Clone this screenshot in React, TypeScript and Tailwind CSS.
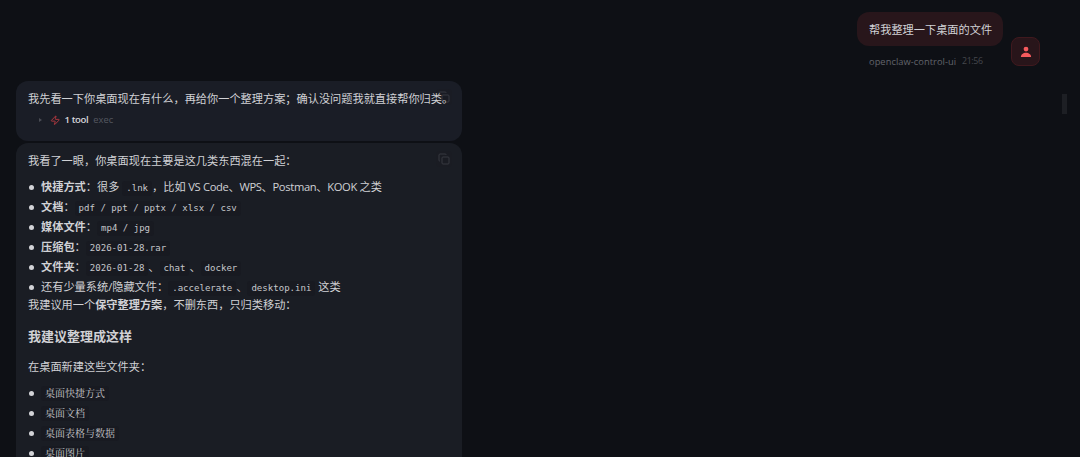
import React from 'react'
import { Zap } from 'lucide-react'

const Code: React.FC<{ children: React.ReactNode }> = ({ children }) => (
  <code className="inline-block h-[15px] rounded-[3px] bg-[#181a21] px-[4px] align-baseline font-['DejaVu_Sans_Mono','Noto_Sans_CJK_SC',monospace] text-[9.07px] leading-[15px] text-[#c6c7cb]">
    {children}
  </code>
)

const FolderName: React.FC<{ children: React.ReactNode }> = ({ children }) => (
  <code className="inline-block h-[15px] rounded-[3px] bg-[#181a21] px-[4px] font-['Noto_Serif_CJK_SC','Noto_Sans_CJK_SC',serif] text-[10px] leading-[14px] text-[#c6c7cb]">
    {children}
  </code>
)

const Item: React.FC<{ children: React.ReactNode }> = ({ children }) => (
  <li className="flex h-5 items-center whitespace-nowrap">
    <span className="mr-[7px] ml-[1px] size-[5px] shrink-0 rounded-full bg-[#d2d3d7]" />
    {children}
  </li>
)

const CopyButton: React.FC = () => (
  <button className="absolute top-[8px] right-[10px] flex size-4 items-center justify-center rounded bg-[#1b1d23]/60 text-[#373941]">
    <svg width="12" height="12" viewBox="0 0 12 12" fill="none" stroke="currentColor">
      <rect x="4" y="4" width="7" height="7" rx="1" />
      <path d="M2 8.2c-.6 0-1-.4-1-1V2c0-.6.4-1 1-1h5.2c.6 0 1 .4 1 1" />
    </svg>
  </button>
)

const FOLDERS = ['桌面快捷方式', '桌面文档', '桌面表格与数据', '桌面图片']

export default function App() {
  return (
    <div className="relative h-[457px] w-[1080px] overflow-hidden bg-[#0e1015] font-['Open_Sans','Noto_Sans_CJK_SC',sans-serif] text-[11.2px] text-[#d0d1d5]">
      <div className="flex h-[81px] items-start justify-end pt-3 pr-10">
        <div>
          <div className="flex h-[34px] w-[146px] items-center rounded-xl bg-[#28161b] pl-3 font-['Noto_Sans_CJK_SC',sans-serif] whitespace-nowrap">
            帮我整理一下桌面的文件
          </div>
          <div className="mt-[9px] flex h-[14px] items-center pl-3 text-[9.3px] whitespace-nowrap text-[#62646b]">
            <span className="w-[87px] font-medium tracking-[0.005em]">openclaw-control-ui</span>
            <span className="ml-[6px] text-[8.8px] tracking-[-0.04em] text-[#45474d]">21:56</span>
          </div>
        </div>
        <div className="mt-[25px] ml-2 flex size-[29px] items-center justify-center rounded-lg border border-[#40191e] bg-[#28151a]">
          <svg width="12" height="12" viewBox="0 0 12 12" fill="#f65a5d">
            <circle cx="6" cy="3.1" r="2.4" />
            <path d="M.9 11.1c0-2.7 2.3-4.3 5.1-4.3s5.1 1.6 5.1 4.3z" />
          </svg>
        </div>
      </div>

      <div className="ml-4 flex w-[446px] flex-col gap-[2px]">
        <div className="relative h-[60px] rounded-xl bg-[#1a1d26] px-3 pt-2">
          <CopyButton />
          <p className="relative h-[18px] font-['Noto_Sans_CJK_SC',sans-serif] leading-[18px] whitespace-nowrap">
            我先看一下你桌面现在有什么，再给你一个整理方案；确认没问题我就直接帮你归类。
          </p>
          <div className="mt-1 flex h-[18px] items-center pl-[11px] text-[9.6px]">
            <span className="h-0 w-0 border-y-[2px] border-l-[3px] border-y-transparent border-l-[#4a4c54]" />
            <Zap className="mr-1 ml-[8px] text-[#bd3c42]" size={10.5} strokeWidth={2} />
            <span className="font-semibold tracking-[-0.04em] text-[#d6d7db]">1 tool</span>
            <span className="ml-[5px] text-[9.3px] text-[#555861]">exec</span>
          </div>
        </div>

        <div className="relative h-[340px] rounded-t-xl bg-[#1a1d24] px-3 pt-[9px]">
          <CopyButton />
          <p className="h-[18px] leading-[18px]">我看了一眼，你桌面现在主要是这几类东西混在一起：</p>
          <ul className="mt-[7px]">
            <Item>
              <p className="leading-5">
                <strong>快捷方式</strong>：很多 <Code>.lnk</Code>，比如
                <span className="tracking-[-0.33px]"> VS Code、WPS、Postman、KOOK </span>之类
              </p>
            </Item>
            <Item>
              <p className="leading-5"><strong>文档</strong>：<Code>pdf / ppt / pptx / xlsx / csv</Code></p>
            </Item>
            <Item>
              <p className="leading-5"><strong>媒体文件</strong>：<Code>mp4 / jpg</Code></p>
            </Item>
            <Item>
              <p className="leading-5"><strong>压缩包</strong>：<Code>2026-01-28.rar</Code></p>
            </Item>
            <Item>
              <p className="leading-5">
                <strong>文件夹</strong>：<Code>2026-01-28</Code>、<Code>chat</Code>、<Code>docker</Code>
              </p>
            </Item>
            <Item>
              <p className="leading-5">
                还有少量系统/隐藏文件：<Code>.accelerate</Code>、<Code>desktop.ini</Code> 这类
              </p>
            </Item>
          </ul>
          <p className="-mt-[1px] h-[18px] leading-[18px]">
            我建议用一个<strong>保守整理方案</strong>，不删东西，只归类移动：
          </p>
          <h3 className="mt-[12px] h-5 text-[13px] leading-5 font-bold">我建议整理成这样</h3>
          <p className="mt-[12px] h-[18px] leading-[18px]">在桌面新建这些文件夹：</p>
          <ul className="mt-[7px]">
            {FOLDERS.map((name) => (
              <Item key={name}>
                <FolderName>{name}</FolderName>
              </Item>
            ))}
          </ul>
        </div>
      </div>

      {/* scrollbar thumb */}
      <div className="absolute top-[94px] right-[13px] h-5 w-[5px] bg-[#1d1f24]" />
    </div>
  )
}
